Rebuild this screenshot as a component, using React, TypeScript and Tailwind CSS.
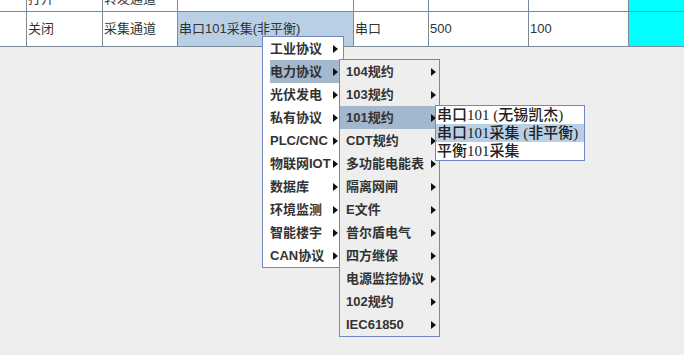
import React from 'react';

const FONT = '"Liberation Sans", "Noto Sans CJK SC", sans-serif';

const widths = [27, 76, 75, 176, 75, 100, 100];

function Cell({ w, children, className = '' }: { w?: number; children?: React.ReactNode; className?: string }) {
  return (
    <div
      className={`shrink-0 border-r border-[#7a8a99] pl-px flex items-center overflow-hidden whitespace-nowrap ${className}`}
      style={w ? { width: w } : undefined}
    >
      {children}
    </div>
  );
}

function Arrow() {
  return <span className="block w-0 h-0 border-y-[4px] border-y-transparent border-l-[5px] border-l-[#111]" />;
}

function MenuItem({ label, active, arrowRight }: { label: string; active?: boolean; arrowRight: string }) {
  return (
    <div className={`h-[23px] flex items-center justify-between ${active ? 'bg-[#a3b8cc]' : ''}`}>
      <span className="font-bold text-[13px] text-[#333] leading-none">{label}</span>
      <span className={arrowRight}>
        <Arrow />
      </span>
    </div>
  );
}

export default function App() {
  const menu1 = ['工业协议', '电力协议', '光伏发电', '私有协议', 'PLC/CNC', '物联网IOT', '数据库', '环境监测', '智能楼宇', 'CAN协议'];
  const menu2 = ['104规约', '103规约', '101规约', 'CDT规约', '多功能电能表', '隔离网闸', 'E文件', '普尔盾电气', '四方继保', '电源监控协议', '102规约', 'IEC61850'];
  const menu3 = ['串口101 (无锡凯杰)', '串口101采集 (非平衡)', '平衡101采集'];

  return (
    <div className="relative w-[684px] h-[355px] bg-[#eeeeee] overflow-hidden text-[13px] text-[#333]" style={{ fontFamily: FONT }}>
      {/* Table */}
      <div className="bg-white">
        <div className="flex h-[12px] border-b border-[#7a8a99] overflow-hidden">
          <Cell w={widths[0]} />
          <Cell w={widths[1]}><span className="-mt-[14px]">打开</span></Cell>
          <Cell w={widths[2]}><span className="-mt-[14px]">转发通道</span></Cell>
          <Cell w={widths[3]} />
          <Cell w={widths[4]} />
          <Cell w={widths[5]} />
          <Cell w={widths[6]} />
          <div className="flex-1 bg-[#00ffff]" />
        </div>
        <div className="flex h-[35px] border-b border-[#7a8a99]">
          <Cell w={widths[0]} />
          <Cell w={widths[1]}>关闭</Cell>
          <Cell w={widths[2]}>采集通道</Cell>
          <Cell w={widths[3]} className="bg-[#b8cfe5]">串口101采集(非平衡)</Cell>
          <Cell w={widths[4]}>串口</Cell>
          <Cell w={widths[5]}>500</Cell>
          <Cell w={widths[6]}>100</Cell>
          <div className="flex-1 bg-[#00ffff]" />
        </div>
      </div>

      {/* Popup menu level 1 */}
      <div className="absolute left-[262px] top-[36px] w-[82px] bg-white border border-[#7087c2]">
        {menu1.map((m, i) => (
          <div key={m} className="pl-[7px]">
            <MenuItem label={m} active={i === 1} arrowRight="mr-[5px]" />
          </div>
        ))}
      </div>

      {/* Popup menu level 2 */}
      <div className="absolute left-[339px] top-[59px] w-[101px] bg-[#eeeeee] border border-[#7087c2]">
        {menu2.map((m, i) => (
          <div key={m} className={i === 2 ? 'bg-[#a3b8cc] pl-[6px]' : 'pl-[6px]'}>
            <MenuItem label={m} active={i === 2} arrowRight="mr-[3px]" />
          </div>
        ))}
      </div>

      {/* Popup menu level 3 */}
      <div className="absolute left-[435px] top-[105px] w-[150px] bg-white border border-[#7087c2]">
        {menu3.map((m, i) => (
          <div
            key={m}
            className={`h-[18px] pl-[1px] flex items-center text-[15px] font-medium leading-none text-[#222] whitespace-pre ${i === 1 ? 'bg-[#b8cfe5]' : ''}`}
            style={{ fontFamily: '"Liberation Serif", "Noto Sans CJK SC", serif' }}
          >
            {m}
          </div>
        ))}
      </div>
    </div>
  );
}
